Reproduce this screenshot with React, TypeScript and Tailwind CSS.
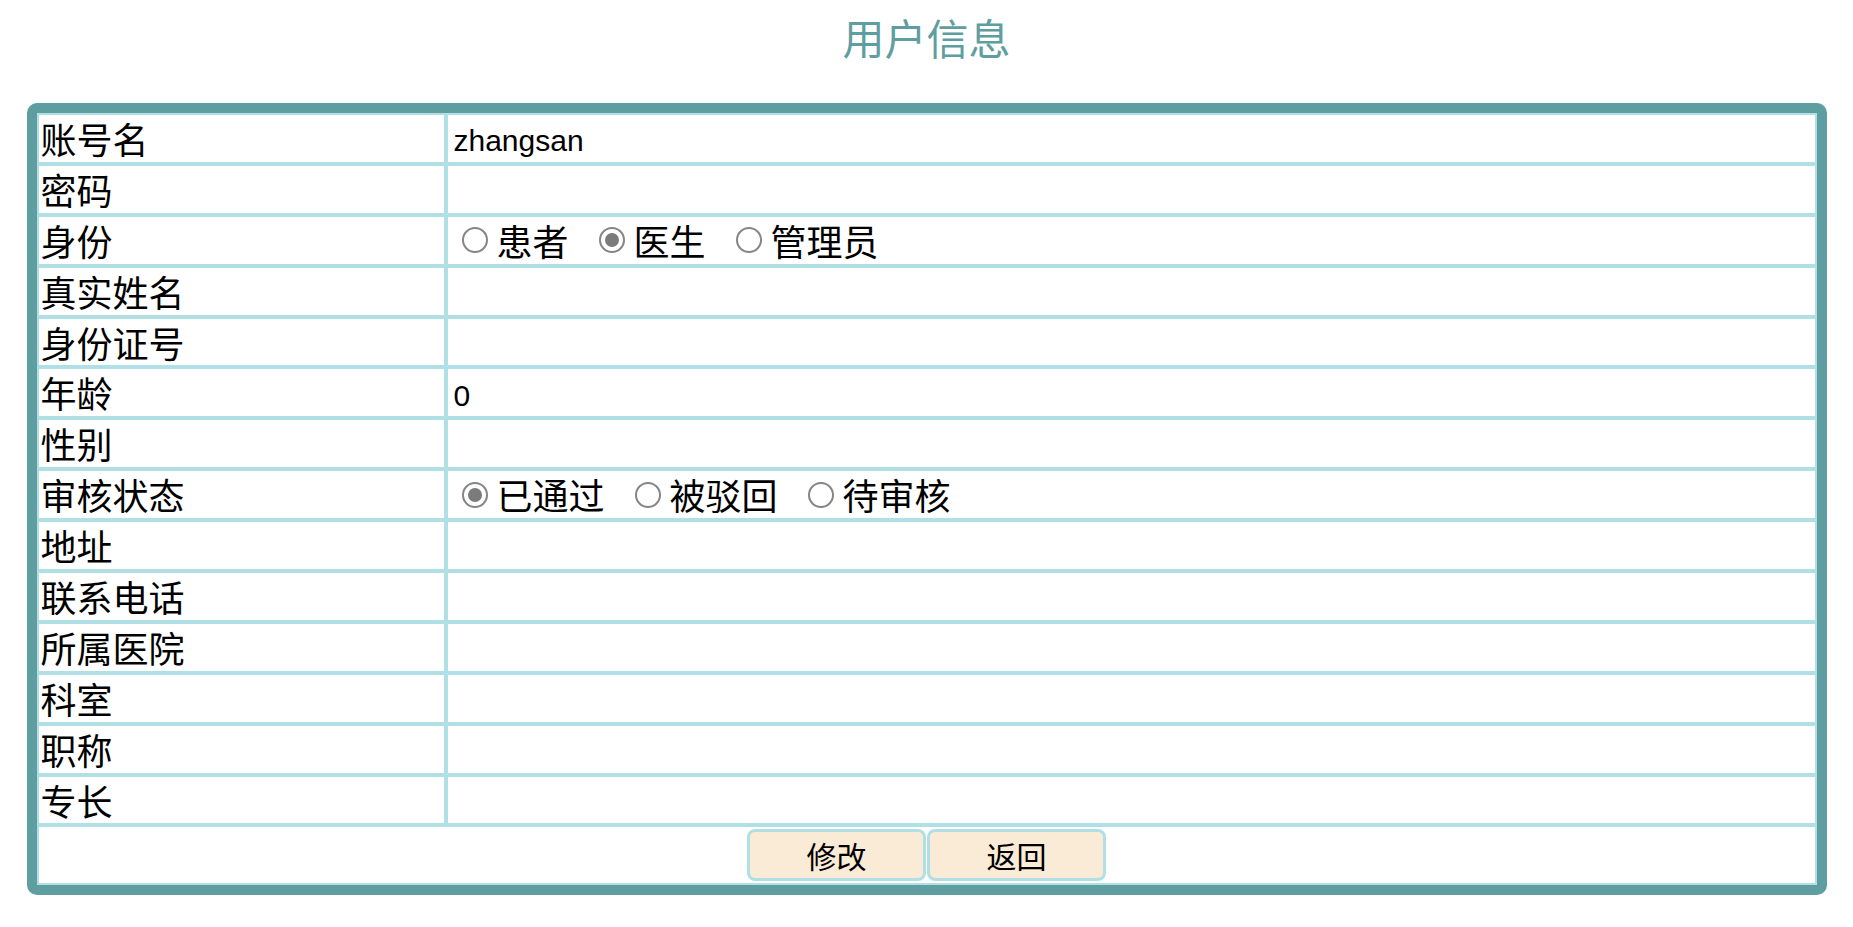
type Row = {
  label: string;
  value?: string;
  radios?: string[];
  checked?: number;
};

const rows: Row[] = [
  { label: '账号名', value: 'zhangsan' },
  { label: '密码' },
  { label: '身份', radios: ['患者', '医生', '管理员'], checked: 1 },
  { label: '真实姓名' },
  { label: '身份证号' },
  { label: '年龄', value: '0' },
  { label: '性别' },
  { label: '审核状态', radios: ['已通过', '被驳回', '待审核'], checked: 0 },
  { label: '地址' },
  { label: '联系电话' },
  { label: '所属医院' },
  { label: '科室' },
  { label: '职称' },
  { label: '专长' },
];

const Radio = ({ on }: { on: boolean }) => (
  <span className="flex items-center justify-center w-[26px] h-[26px] rounded-full border-2 border-[#858585] bg-white shrink-0">
    {on && <span className="w-[14px] h-[14px] rounded-full bg-[#7b7b7b]" />}
  </span>
);

const App = () => {
  return (
    <div className="min-h-screen bg-white font-['Noto_Sans_CJK_SC',sans-serif] text-black">
      <h1 className="mt-[12px] mb-[41px] text-center text-[42px] leading-[50px] font-normal text-[#5f9ea0]">
        用户信息
      </h1>

      <div className="mx-auto w-[1800px] border-[10px] border-[#5f9ea0] rounded-[10px] overflow-hidden">
        <div className="grid grid-cols-[409px_1fr]">
          {rows.map((row) => (
            <div key={row.label} className="contents">
              <div className="h-[50.9px] border-2 border-[#b0e0e6] pl-[2px] text-[36px] leading-[46.9px] whitespace-nowrap">
                {row.label}
              </div>
              <div className="h-[50.9px] border-2 border-[#b0e0e6] pl-[6px] flex items-center">
                {row.value && (
                  <span className="pt-[6px] font-['Liberation_Sans','Noto_Sans_CJK_SC',sans-serif] text-[30px] leading-[40px]">
                    {row.value}
                  </span>
                )}
                {row.radios && (
                  <div className="flex items-center gap-[30px] pl-[8px]">
                    {row.radios.map((r, i) => (
                      <label key={r} className="flex items-center">
                        <Radio on={i === row.checked} />
                        <span className="ml-[9px] text-[36px] leading-[46.9px]">{r}</span>
                      </label>
                    ))}
                  </div>
                )}
              </div>
            </div>
          ))}

          <div className="col-span-2 h-[60px] border-2 border-[#b0e0e6] flex items-center justify-center gap-[1px]">
            <button className="w-[179px] h-[52px] bg-[#faebd7] border-[3px] border-[#b0e0e6] rounded-[8px] text-[30px] leading-none">
              修改
            </button>
            <button className="w-[179px] h-[52px] bg-[#faebd7] border-[3px] border-[#b0e0e6] rounded-[8px] text-[30px] leading-none">
              返回
            </button>
          </div>
        </div>
      </div>
    </div>
  );
};

export default App;
